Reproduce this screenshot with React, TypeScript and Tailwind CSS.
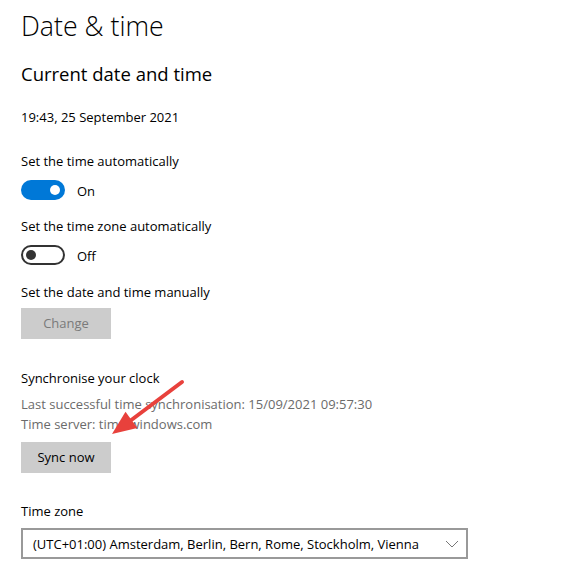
const font = { fontFamily: '"Open Sans", "Noto Sans", sans-serif' };

function Toggle({ on, label }: { on: boolean; label: string }) {
  return (
    <div className="flex h-[20px] items-center">
      {on ? (
        <div className="relative h-[20px] w-[44px] rounded-full bg-[#0078d7]">
          <div className="absolute right-[5px] top-[5px] h-[10px] w-[10px] rounded-full bg-white" />
        </div>
      ) : (
        <div className="relative h-[20px] w-[44px] rounded-full border-2 border-[#333333] bg-white">
          <div className="absolute left-[3px] top-[3px] h-[10px] w-[10px] rounded-full bg-[#333333]" />
        </div>
      )}
      <span className="ml-[12px] mt-[2px] text-[13px] leading-[20px] text-black">{label}</span>
    </div>
  );
}

export default function App() {
  return (
    <div className="relative h-[579px] w-[566px] overflow-hidden bg-white text-black" style={font}>
      <div className="flex flex-col items-start pl-[21px] pt-[8px]">
        <h1 className="h-[36px] text-[26.7px] font-light leading-[36px]">Date &amp; time</h1>
        <h2 className="mt-[16px] text-[18.5px] leading-[28px]">Current date and time</h2>
        <p className="mt-[19px] text-[13px] leading-[20px]">19:43, 25 September 2021</p>

        <p className="mt-[24px] text-[13px] leading-[20px]">Set the time automatically</p>
        <div className="mt-[9px]">
          <Toggle on label="On" />
        </div>

        <p className="mt-[16px] text-[13px] leading-[20px]">Set the time zone automatically</p>
        <div className="mt-[9px]">
          <Toggle on={false} label="Off" />
        </div>

        <p className="mt-[17px] text-[13px] leading-[20px]">Set the date and time manually</p>
        <button
          type="button"
          disabled
          className="mt-[6px] h-[31px] w-[90px] bg-[#cccccc] text-[13px] text-[#7a7a7a]"
        >
          Change
        </button>

        <p className="mt-[29px] text-[13px] leading-[20px]">Synchronise your clock</p>
        <p className="mt-[6px] text-[13px] leading-[20px] text-[#6b6b6b]">
          Last successful time synchronisation: 15/09/2021 09:57:30
        </p>
        <p className="text-[13px] leading-[20px] text-[#6b6b6b]">Time server: time.windows.com</p>
        <button
          type="button"
          className="mt-[8px] h-[31px] w-[90px] bg-[#cccccc] text-[13px] text-black"
        >
          Sync now
        </button>

        <p className="mt-[28px] text-[13px] leading-[20px]">Time zone</p>
        <div className="mt-[7px] flex h-[31px] w-[447px] items-center justify-between border-2 border-[#999999] pl-[10px] pr-[7px]">
          <span className="whitespace-nowrap text-[13px] leading-[20px]">
            (UTC+01:00) Amsterdam, Berlin, Bern, Rome, Stockholm, Vienna
          </span>
          <svg width="14" height="8" viewBox="0 0 14 8">
            <path d="M1 1 L7 7 L13 1" fill="none" stroke="#777777" strokeWidth="1" />
          </svg>
        </div>
      </div>

      {/* red annotation arrow */}
      <svg
        className="pointer-events-none absolute left-0 top-0"
        width="566"
        height="579"
        viewBox="0 0 566 579"
      >
        <line x1="182" y1="382" x2="130" y2="421" stroke="#e8413c" strokeWidth="4" strokeLinecap="round" />
        <polygon points="112,434 137.3,427.9 125.5,411.7" fill="#e8413c" />
      </svg>
    </div>
  );
}
